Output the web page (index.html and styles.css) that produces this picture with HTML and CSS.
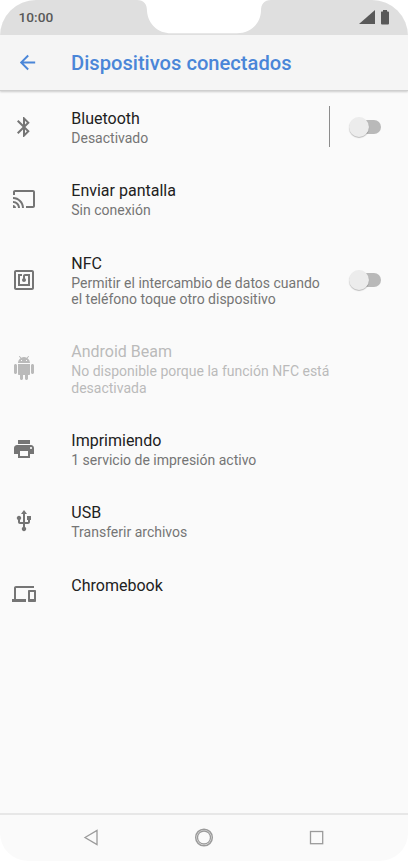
FILE: index.html
```html
<!DOCTYPE html>
<html lang="es">
<head>
<meta charset="utf-8">
<title>Dispositivos conectados</title>
<link rel="stylesheet" href="styles.css">
</head>
<body>
<div class="phone">
  <header class="status">
    <svg class="notch" width="134" height="34" viewBox="0 0 134 34"><path d="M0 0C7 0 10 4 10 11C11 24 21 33.300 34 33.300H100C113 33.300 123.500 24 124 11C124 4 127 0 134 0Z" fill="#fff"/></svg>
    <span class="clock">10:00</span>
    <svg class="indicators" width="31" height="16" viewBox="0 0 31 16"><path d="M0 15H16V1Z"/><path d="M22.500 2.500H24V1H28V2.500H29Q30 2.500 30 3.500V14.500Q30 15.500 29 15.500H23Q22 15.500 22 14.500V3.500Q22 2.500 22.500 2.500Z"/></svg>
  </header>
  <div class="appbar">
    <svg class="back" viewBox="0 0 24 24"><path d="M20 11H7.830l5.590-5.590L12 4l-8 8 8 8 1.410-1.410L7.830 13H20v-2z"/></svg>
    <h1>Dispositivos conectados</h1>
  </div>
  <main>
    <section class="row">
      <svg class="icon" viewBox="0 0 24 24"><path d="M17.710 7.710L12 2h-1v7.590L6.410 5 5 6.410 10.590 12 5 17.590 6.410 19 11 14.410V22h1l5.710-5.710-4.300-4.290 4.300-4.290zM13 5.830l1.880 1.880L13 9.590V5.830zm1.880 10.460L13 18.170v-3.760l1.880 1.880z"/></svg>
      <div class="copy"><h2>Bluetooth</h2><p>Desactivado</p></div>
      <div class="divider"></div>
      <div class="switch"></div>
    </section>
    <section class="row">
      <svg class="icon" viewBox="0 0 24 24"><path d="M21 3H3c-1.100 0-2 .9-2 2v3h2V5h18v14h-7v2h7c1.100 0 2-.9 2-2V5c0-1.100-.9-2-2-2zM1 18v3h3c0-1.660-1.340-3-3-3zm0-4v2c2.760 0 5 2.240 5 5h2c0-3.870-3.130-7-7-7zm0-4v2c4.970 0 9 4.030 9 9h2c0-6.080-4.930-11-11-11z"/></svg>
      <div class="copy"><h2>Enviar pantalla</h2><p>Sin conexión</p></div>
    </section>
    <section class="row tall">
      <svg class="icon" viewBox="0 0 24 24"><path d="M20 2H4c-1.100 0-2 .9-2 2v16c0 1.100.9 2 2 2h16c1.100 0 2-.9 2-2V4c0-1.100-.9-2-2-2zm0 18H4V4h16v16zM18 6h-5c-1.100 0-2 .9-2 2v2.280c-.6.350-1 .98-1 1.720 0 1.100.9 2 2 2s2-.9 2-2c0-.74-.4-1.380-1-1.720V8h3v8H8V8h2V6H6v12h12V6z"/></svg>
      <div class="copy"><h2>NFC</h2><p>Permitir el intercambio de datos cuando<br>el teléfono toque otro dispositivo</p></div>
      <div class="switch"></div>
    </section>
    <section class="row tall disabled">
      <svg class="icon" viewBox="0 0 24 24"><path d="M6 18c0 .55.450 1 1 1h1v3.500c0 .83.670 1.500 1.500 1.500s1.500-.67 1.500-1.500V19h2v3.500c0 .83.670 1.500 1.500 1.500s1.500-.67 1.500-1.500V19h1c.55 0 1-.45 1-1V8H6v10zM3.500 8C2.670 8 2 8.670 2 9.500v7c0 .83.670 1.500 1.500 1.500S5 17.330 5 16.500v-7C5 8.670 4.330 8 3.500 8zm17 0c-.83 0-1.500.67-1.500 1.500v7c0 .83.670 1.500 1.500 1.500s1.500-.67 1.500-1.500v-7c0-.83-.67-1.500-1.500-1.500zm-4.970-5.840l1.300-1.300c.2-.2.200-.51 0-.71-.2-.2-.51-.2-.71 0l-1.480 1.480C13.850 1.230 12.950 1 12 1c-.96 0-1.860.23-2.660.63L7.850.15c-.2-.2-.51-.2-.71 0-.2.200-.2.510 0 .71l1.310 1.310C6.970 3.260 6 5.010 6 7h12c0-1.990-.97-3.750-2.470-4.840zM10 5H9V4h1v1zm5 0h-1V4h1v1z"/></svg>
      <div class="copy"><h2>Android Beam</h2><p>No disponible porque la función NFC está<br>desactivada</p></div>
    </section>
    <section class="row">
      <svg class="icon" viewBox="0 0 24 24"><path d="M19 8H5c-1.660 0-3 1.340-3 3v6h4v4h12v-4h4v-6c0-1.660-1.340-3-3-3zm-3 11H8v-5h8v5zm3-7c-.55 0-1-.45-1-1s.45-1 1-1 1 .45 1 1-.45 1-1 1zm-1-9H6v4h12V3z"/></svg>
      <div class="copy"><h2>Imprimiendo</h2><p>1 servicio de impresión activo</p></div>
    </section>
    <section class="row">
      <svg class="icon" viewBox="0 0 24 24"><path d="M15 7v4h1v2h-3V5h2l-3-4-3 4h2v8H8v-2.070c.7-.37 1.200-1.080 1.200-1.930 0-1.210-.99-2.200-2.200-2.200S4.800 7.790 4.800 9c0 .85.500 1.560 1.200 1.930V13c0 1.110.89 2 2 2h3v3.050c-.71.370-1.200 1.100-1.200 1.950 0 1.220.99 2.200 2.200 2.200s2.200-.98 2.200-2.200c0-.85-.49-1.580-1.200-1.950V15h3c1.110 0 2-.89 2-2v-2h1V7h-4z"/></svg>
      <div class="copy"><h2>USB</h2><p>Transferir archivos</p></div>
    </section>
    <section class="row">
      <svg class="icon" viewBox="0 0 24 24"><path d="M4 6h18V4H4c-1.100 0-2 .9-2 2v11H0v3h14v-3H4V6zm19 2h-6c-.55 0-1 .45-1 1v10c0 .55.450 1 1 1h6c.55 0 1-.45 1-1V9c0-.55-.45-1-1-1zm-1 9h-4v-7h4v7z"/></svg>
      <div class="copy"><h2>Chromebook</h2></div>
    </section>
  </main>
  <nav>
    <svg viewBox="0 0 20 20"><path d="M4 9.500L16 2.500V16.500Z"/></svg>
    <svg viewBox="0 0 20 20"><circle cx="10" cy="9.500" r="8.300" stroke-width="1.500"/><circle cx="10" cy="9.500" r="6.500" stroke-width="1.300"/></svg>
    <svg viewBox="0 0 20 20"><rect x="3.500" y="3.500" width="12.200" height="12.200"/></svg>
  </nav>
</div>
</body>
</html>
```
FILE: styles.css
```css
* { box-sizing: border-box; }
body { margin: 0; background: #fff; font-family: Roboto, sans-serif; }
.phone { width: 408px; height: 861px; display: flex; flex-direction: column; overflow: hidden; background: #fafafa; border-radius: 36px 36px 28px 28px; }
.status { position: relative; flex: none; height: 35px; padding: 0 18px 0 18.500px; display: flex; justify-content: space-between; align-items: center; background: #dfdfdf; }
.notch { position: absolute; left: 137px; top: 0; }
.clock { margin-top: -1px; font-size: 13.700px; font-weight: 500; color: #595959; }
.indicators { fill: #595959; margin-top: -1px; }
.appbar { flex: none; height: 56px; padding-left: 16px; display: flex; align-items: center; background: #f5f5f5; border-bottom: 1px solid #cfcfcf; box-shadow: 0 1px 2px #00000030; }
.back { width: 23px; height: 23px; margin-right: 32px; fill: #4a86d8; }
h1 { margin: 1px 0 0; font-size: 20.150px; line-height: 24px; font-weight: 500; color: #4a86d8; white-space: nowrap; }
main { flex: 1; }
.row { height: 72.500px; padding: 0 27px 0 11px; display: flex; align-items: center; }
.row.tall { height: 88.500px; }
.icon { width: 24px; height: 24px; flex: none; fill: #757575; margin: -1px 35.700px 0 0.600px; }
.copy { flex: 1; align-self: flex-start; padding-top: 17.600px; white-space: nowrap; }
h2 { margin: 0; font-size: 16px; line-height: 20px; font-weight: 400; color: #212121; }
p { margin: 1.400px 0 0; font-size: 14px; line-height: 16.400px; color: #757575; }
.disabled h2, .disabled p { color: #bababa; }
.disabled .icon { fill: #bababa; }
.divider { width: 1px; height: 41px; margin: -1px 19px 0 0; background: #8c8c8c; }
.switch { position: relative; width: 29px; height: 14px; border-radius: 7px; background: #b9b9b9; margin: -1px 0 0 3px; }
.switch::before { content: ""; position: absolute; left: -3px; top: -3px; width: 20px; height: 20px; border-radius: 50%; background: #ececec; box-shadow: 0 1px 1px #00000040; }
nav { flex: none; height: 48px; padding: 0 81px 1px; display: flex; justify-content: space-between; align-items: center; border-top: 2px solid #e7e7e7; }
nav svg { width: 20px; height: 20px; fill: none; stroke: #9b9b9b; stroke-width: 1.300; }
```
